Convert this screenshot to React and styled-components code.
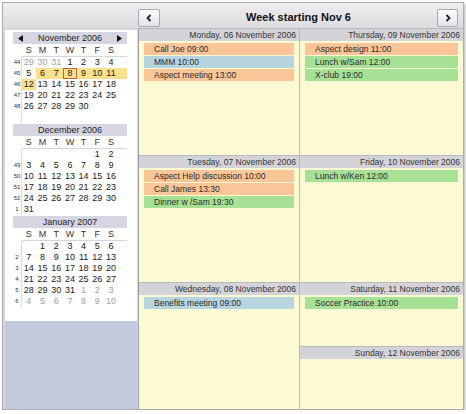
import React from 'react'
import styled, { createGlobalStyle } from 'styled-components'

const GlobalStyle = createGlobalStyle`
  html, body { margin: 0; padding: 0; background: #fff; }
  body { font-family: "Liberation Sans", Arial, sans-serif; }
`

const Frame = styled.div`
  margin: 2px 0 0 2px;
  width: 460px;
  height: 406px;
  border: 1px solid #acacb2;
  box-shadow: 1px 2px 2px rgba(0, 0, 0, 0.3);
  background: linear-gradient(#efeff1, #dcdcdf 25px, #d6d7dc 25px);
  display: grid;
  grid-template-columns: 135px 1fr;
  grid-template-rows: 25px 1fr;
`

const Toolbar = styled.div`
  grid-column: 2;
  grid-row: 1;
  display: flex;
  align-items: flex-start;
  padding: 6px 5px 0 0;
`

const NavButton = styled.div`
  box-sizing: border-box;
  width: ${p => p.$w}px;
  height: 18px;
  border: 1px solid #a9a9b5;
  border-radius: 2px;
  background: linear-gradient(#fefefe, #e2e2ea);
  display: flex;
  align-items: center;
  justify-content: center;
`

const Title = styled.div`
  flex: 1;
  text-align: center;
  line-height: 17px;
  font-size: 11px;
  font-weight: bold;
  color: #111;
`

const Sidebar = styled.div`
  grid-column: 1;
  grid-row: 2;
  margin: 2px 1px 0 2px;
  background: #c2c9dc;
  display: flex;
  flex-direction: column;
`

const CalBox = styled.div`
  background: #fff;
  padding: 2px 10px 13px 8px;
`

const Month = styled.div`
  margin-bottom: 1px;
`

const MonthBar = styled.div`
  height: 12px;
  background: #d6d6e3;
  display: grid;
  grid-template-columns: 8px 1fr 8px;
  align-items: center;
  padding: 0 5px;
  font-size: 9px;
  line-height: 12px;
  color: #222;
  text-align: center;
`

const DayGrid = styled.div`
  margin-top: 1px;
  display: grid;
  grid-template-columns: 9px repeat(7, 13.7px) 1fr;
  grid-template-rows: 12px repeat(6, 11px);
`

const NameCell = styled.div`
  box-sizing: border-box;
  height: 12px;
  border-bottom: ${p => (p.$blank ? 'none' : '1px solid #d6d6da')};
  font-size: 9px;
  line-height: 11px;
  text-align: center;
  color: #333;
`

const WeekNo = styled.div`
  box-sizing: border-box;
  border-right: 1px solid #dcdce0;
  font-size: 6px;
  line-height: 11px;
  text-align: center;
  color: #333;
`

const DayNum = styled.div`
  box-sizing: border-box;
  font-size: 9px;
  line-height: 11px;
  text-align: center;
  color: ${p => (p.$muted ? '#a0a0a0' : '#1a1a1a')};
  background: ${p => (p.$hl ? '#fbe08f' : 'transparent')};
  box-shadow: ${p => (p.$today ? 'inset 0 0 0 1px #b3693a' : 'none')};
`

const Filler = styled.div`
  background: ${p => (p.$hl ? '#fbe08f' : 'transparent')};
`

const WeekGrid = styled.div`
  grid-column: 2;
  grid-row: 2;
  border-left: 1px solid #9fa0a8;
  border-top: 1px solid #b4b4ba;
  display: grid;
  grid-template-columns: 160px 1fr;
  grid-template-rows: repeat(6, 1fr);
  gap: 1px;
  background: #b9b9bf;
  min-height: 0;
`

const DayPanel = styled.div`
  grid-column: ${p => p.$col};
  grid-row: span ${p => p.$span};
  background: #fbfad3;
  display: flex;
  flex-direction: column;
  min-height: 0;
`

const DayHeader = styled.div`
  height: 12px;
  line-height: 12px;
  background: #d4d4d8;
  text-align: right;
  padding-right: 3px;
  font-size: 8.5px;
  color: #333;
`

const EventList = styled.div`
  display: flex;
  flex-direction: column;
  gap: 1px;
  padding: 2px 5px 0 5px;
`

const eventColors = { orange: '#fbc697', blue: '#b7d5df', green: '#a7e196' }

const Event = styled.div`
  height: 12px;
  line-height: 12px;
  padding-left: 10px;
  font-size: 8.5px;
  color: #2a2a2a;
  background: ${p => eventColors[p.$kind]};
  white-space: nowrap;
`

const Chevron = ({ dir }) => (
  <svg width="6" height="8" viewBox="0 0 6 8">
    <path
      d={dir === 'left' ? 'M4.5 1 L1.5 4 L4.5 7' : 'M1.5 1 L4.5 4 L1.5 7'}
      fill="none"
      stroke="#222"
      strokeWidth="1.8"
    />
  </svg>
)

const Triangle = ({ dir }) => (
  <svg width="5" height="7" viewBox="0 0 5 7" style={{ justifySelf: dir === 'left' ? 'start' : 'end' }}>
    <polygon points={dir === 'left' ? '0,3.5 5,0 5,7' : '5,3.5 0,0 0,7'} fill="#111" />
  </svg>
)

// '29m' = other month, '8t' = today, 'h' = highlighted week
const months = [
  {
    title: 'November 2006',
    arrows: true,
    weeks: [
      [44, ['29m', '30m', '31m', '1', '2', '3', '4']],
      [45, ['5', '6h', '7h', '8ht', '9h', '10h', '11h']],
      [46, ['12h', '13', '14', '15', '16', '17', '18']],
      [47, ['19', '20', '21', '22', '23', '24', '25']],
      [48, ['26', '27', '28', '29', '30', '', '']],
      ['', ['', '', '', '', '', '', '']],
    ],
  },
  {
    title: 'December 2006',
    weeks: [
      ['', ['', '', '', '', '', '1', '2']],
      [49, ['3', '4', '5', '6', '7', '8', '9']],
      [50, ['10', '11', '12', '13', '14', '15', '16']],
      [51, ['17', '18', '19', '20', '21', '22', '23']],
      [52, ['24', '25', '26', '27', '28', '29', '30']],
      [1, ['31', '', '', '', '', '', '']],
    ],
  },
  {
    title: 'January 2007',
    weeks: [
      ['', ['', '1', '2', '3', '4', '5', '6']],
      [2, ['7', '8', '9', '10', '11', '12', '13']],
      [3, ['14', '15', '16', '17', '18', '19', '20']],
      [4, ['21', '22', '23', '24', '25', '26', '27']],
      [5, ['28', '29', '30', '31', '1m', '2m', '3m']],
      [6, ['4m', '5m', '6m', '7m', '8m', '9m', '10m']],
    ],
  },
]

const dayNames = ['S', 'M', 'T', 'W', 'T', 'F', 'S']

const days = [
  {
    label: 'Monday, 06 November 2006', col: 1, span: 2,
    events: [['Call Joe 09:00', 'orange'], ['MMM 10:00', 'blue'], ['Aspect meeting 13:00', 'orange']],
  },
  {
    label: 'Thursday, 09 November 2006', col: 2, span: 2,
    events: [['Aspect design 11:00', 'orange'], ['Lunch w/Sam 12:00', 'green'], ['X-club 19:00', 'green']],
  },
  {
    label: 'Tuesday, 07 November 2006', col: 1, span: 2,
    events: [['Aspect Help discussion 10:00', 'orange'], ['Call James 13:30', 'orange'], ['Dinner w /Sam 19:30', 'green']],
  },
  {
    label: 'Friday, 10 November 2006', col: 2, span: 2,
    events: [['Lunch w/Ken 12:00', 'green']],
  },
  {
    label: 'Wednesday, 08 November 2006', col: 1, span: 2,
    events: [['Benefits meeting 09:00', 'blue']],
  },
  {
    label: 'Saturday, 11 November 2006', col: 2, span: 1,
    events: [['Soccer Practice 10:00', 'green']],
  },
  { label: 'Sunday, 12 November 2006', col: 2, span: 1, events: [] },
]

function MonthView({ month }) {
  return (
    <Month>
      <MonthBar>
        {month.arrows ? <Triangle dir="left" /> : <span />}
        <span>{month.title}</span>
        {month.arrows ? <Triangle dir="right" /> : <span />}
      </MonthBar>
      <DayGrid>
        <NameCell $blank />
        {dayNames.map((d, i) => <NameCell key={i}>{d}</NameCell>)}
        <NameCell />
        {month.weeks.map(([wk, cells], r) => (
          <React.Fragment key={r}>
            <WeekNo>{wk}</WeekNo>
            {cells.map((c, i) => (
              <DayNum key={i} $muted={c.includes('m')} $hl={c.includes('h')} $today={c.includes('t')}>
                {c.replace(/[mht]/g, '')}
              </DayNum>
            ))}
            <Filler $hl={cells[6].includes('h')} />
          </React.Fragment>
        ))}
      </DayGrid>
    </Month>
  )
}

export default function App() {
  return (
    <>
      <GlobalStyle />
      <Frame>
        <Toolbar>
          <NavButton $w={22}><Chevron dir="left" /></NavButton>
          <Title>Week starting Nov 6</Title>
          <NavButton $w={21}><Chevron dir="right" /></NavButton>
        </Toolbar>
        <Sidebar>
          <CalBox>
            {months.map(m => <MonthView key={m.title} month={m} />)}
          </CalBox>
        </Sidebar>
        <WeekGrid>
          {days.map(d => (
            <DayPanel key={d.label} $col={d.col} $span={d.span}>
              <DayHeader>{d.label}</DayHeader>
              <EventList>
                {d.events.map(([text, kind]) => <Event key={text} $kind={kind}>{text}</Event>)}
              </EventList>
            </DayPanel>
          ))}
        </WeekGrid>
      </Frame>
    </>
  )
}
